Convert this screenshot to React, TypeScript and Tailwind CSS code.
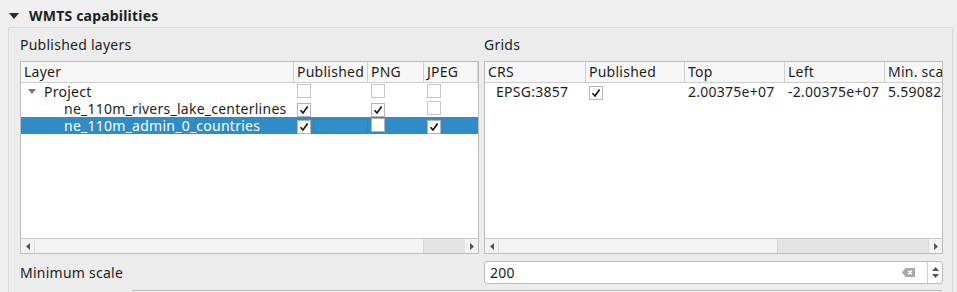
const font = { fontFamily: '"Noto Sans", "Open Sans", sans-serif' };

function Check({ on, blank }: { on?: boolean; blank?: boolean }) {
  return (
    <span
      className={
        "inline-flex h-[14px] w-[14px] items-center justify-center border " +
        (blank ? "border-[#c6c6c6] bg-white" : "border-[#b4b4b4] bg-white")
      }
    >
      {on && (
        <svg width="10" height="10" viewBox="0 0 10 10">
          <path d="M1.5 5.2 L4 8 L8.6 1.5" fill="none" stroke="#111" strokeWidth="1.6" />
        </svg>
      )}
    </span>
  );
}

function HScroll({ thumbLeft, thumbWidth }: { thumbLeft: number; thumbWidth: number }) {
  return (
    <div className="relative flex h-[15px] border-t border-[#c8c8c8] bg-[#f3f3f3]">
      <div className="flex w-[14px] items-center justify-center border-r border-[#d8d8d8]">
        <svg width="4" height="7" viewBox="0 0 4 7">
          <path d="M4 0 L0 3.5 L4 7 Z" fill="#555" />
        </svg>
      </div>
      <div className="flex-1" />
      <div
        className="absolute top-0 h-[14px] bg-[#e3e3e3] border-l border-[#d4d4d4]"
        style={{ left: thumbLeft, width: thumbWidth }}
      />
      <div className="flex w-[14px] items-center justify-center border-l border-[#d8d8d8]">
        <svg width="4" height="7" viewBox="0 0 4 7">
          <path d="M0 0 L4 3.5 L0 7 Z" fill="#555" />
        </svg>
      </div>
    </div>
  );
}

function HeaderCell({ w, children, last }: { w: number | string; children: string; last?: boolean }) {
  return (
    <div
      className={"h-full pl-[3px] leading-[20px] whitespace-nowrap overflow-hidden " + (last ? "" : "border-r border-[#cdcdcd]")}
      style={typeof w === "number" ? { width: w } : { flex: 1 }}
    >
      {children}
    </div>
  );
}

export default function App() {
  return (
    <div className="h-[292px] w-[957px] overflow-hidden bg-[#efefef] text-[14px] tracking-[0.25px] text-[#1e1e1e]" style={font}>
      <div className="flex h-[27px] items-center pl-[9px] pt-[4px]">
        <svg width="10" height="8" viewBox="0 0 10 8" className="mr-[10px] mt-[1px]">
          <path d="M0 1 L10 1 L5 7 Z" fill="#2b2b2b" />
        </svg>
        <span className="text-[14px] font-bold tracking-[0.2px] leading-[18px]">WMTS capabilities</span>
      </div>
      <div className="ml-[8px] mr-[4px] h-[280px] rounded-[2px] border border-[#d9d9d9] bg-[#ececec] pl-[11px] pr-[10px]">
        <div className="grid grid-cols-[459px_459px] gap-x-[5px]">
          <div className="pt-[8px] h-[33px] leading-[18px]">Published layers</div>
          <div className="pt-[8px] h-[33px] leading-[18px]">Grids</div>

          {/* layers table */}
          <div className="flex h-[193px] flex-col border border-[#bdbdbd] bg-white">
            <div className="flex h-[21px] border-b border-[#cdcdcd] bg-[#f7f7f7]">
              <HeaderCell w={273}>Layer</HeaderCell>
              <HeaderCell w={74}>Published</HeaderCell>
              <HeaderCell w={56}>PNG</HeaderCell>
              <HeaderCell w={54}>JPEG</HeaderCell>
            </div>
            <div className="flex-1 leading-[17px]">
              <div className="flex h-[17px] items-center">
                <div className="flex w-[273px] items-center">
                  <svg width="8" height="5" viewBox="0 0 8 5" className="ml-[7px] mr-[8px]">
                    <path d="M0 0 L8 0 L4 5 Z" fill="#777" />
                  </svg>
                  <span>Project</span>
                </div>
                <div className="w-[74px] pl-[3px] pt-[2px]"><Check blank /></div>
                <div className="w-[56px] pl-[3px] pt-[2px]"><Check blank /></div>
                <div className="w-[54px] pl-[3px] pt-[2px]"><Check blank /></div>
              </div>
              <div className="flex h-[17px] items-center">
                <div className="w-[273px] pl-[43px] whitespace-nowrap">ne_110m_rivers_lake_centerlines</div>
                <div className="w-[74px] pl-[3px] pt-[2px]"><Check on /></div>
                <div className="w-[56px] pl-[3px] pt-[2px]"><Check on /></div>
                <div className="w-[54px] pl-[3px] pt-[2px]"><Check blank /></div>
              </div>
              <div className="flex h-[17px] items-center bg-[#308cc6] text-white">
                <div className="w-[273px] pl-[43px] whitespace-nowrap">ne_110m_admin_0_countries</div>
                <div className="flex w-[74px] items-center pl-[3px] pt-[2px]">
                  <Check on />
                  <span className="ml-[3px] h-[15px] w-[54px] rounded-[2px] border border-[#2b84bd] bg-[#318ec8]" />
                </div>
                <div className="w-[56px] pl-[3px] pt-[2px]"><Check /></div>
                <div className="w-[54px] pl-[3px] pt-[2px]"><Check on /></div>
              </div>
            </div>
            <HScroll thumbLeft={402} thumbWidth={42} />
          </div>

          {/* grids table */}
          <div className="flex h-[193px] flex-col border border-[#bdbdbd] bg-white">
            <div className="flex h-[21px] border-b border-[#cdcdcd] bg-[#f7f7f7]">
              <HeaderCell w={101}>CRS</HeaderCell>
              <HeaderCell w={99}>Published</HeaderCell>
              <HeaderCell w={100}>Top</HeaderCell>
              <HeaderCell w={100}>Left</HeaderCell>
              <HeaderCell w="flex" last>Min. scale</HeaderCell>
            </div>
            <div className="flex-1 leading-[17px]">
              <div className="flex h-[17px] items-center whitespace-nowrap">
                <div className="w-[101px] pl-[11px]">EPSG:3857</div>
                <div className="w-[99px] pl-[3px] pt-[2px]"><Check on /></div>
                <div className="w-[100px] pl-[3px]">2.00375e+07</div>
                <div className="w-[100px] pl-[3px]">-2.00375e+07</div>
                <div className="flex-1 overflow-hidden pl-[3px]">5.590822</div>
              </div>
            </div>
            <HScroll thumbLeft={292} thumbWidth={151} />
          </div>

          <div className="pt-[10px] leading-[18px]">Minimum scale</div>
          <div className="pt-[7px]">
            <div className="flex h-[23px] items-center rounded-[3px] border border-[#bcbcbc] bg-white">
              <span className="flex-1 pl-[5px]">200</span>
              <svg width="13" height="9" viewBox="0 0 13 9" className="mr-[12px]">
                <path d="M3.5 0 H13 V9 H3.5 L0 4.5 Z" fill="#a9a9a9" />
                <path d="M6 2.5 L10 6.5 M10 2.5 L6 6.5" stroke="#fff" strokeWidth="1.3" />
              </svg>
              <div className="flex h-full w-[15px] flex-col items-center justify-center gap-[3px] border-l border-[#d0d0d0]">
                <svg width="7" height="4" viewBox="0 0 7 4"><path d="M0 4 L3.5 0 L7 4 Z" fill="#555" /></svg>
                <svg width="7" height="4" viewBox="0 0 7 4"><path d="M0 0 L3.5 4 L7 0 Z" fill="#555" /></svg>
              </div>
            </div>
          </div>
        </div>
        <div className="ml-[112px] mt-[6px] h-[2px] border-t border-[#bcbcbc]" />
      </div>
    </div>
  );
}
